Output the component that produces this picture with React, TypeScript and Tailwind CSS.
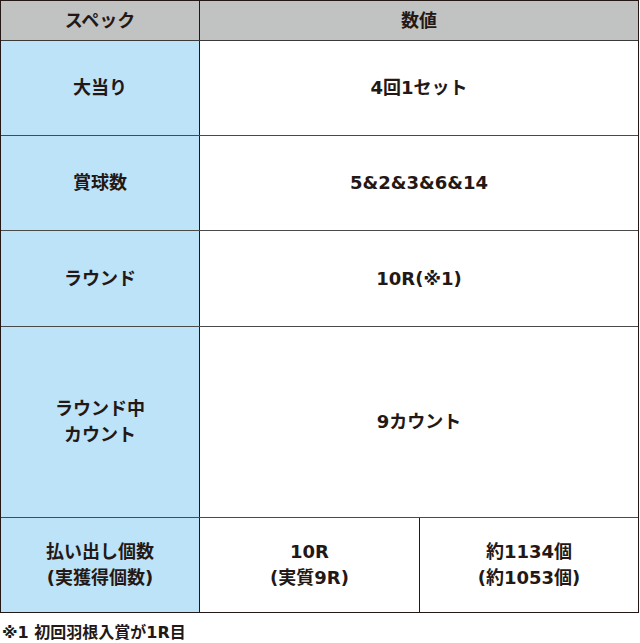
import React from "react";

const font = { fontFamily: '"DejaVu Sans", "Noto Sans CJK JP", sans-serif' };

export default function App() {
  const rows: { label: React.ReactNode; value: React.ReactNode; h: string }[] = [
    { label: "大当り", value: "4回1セット", h: "h-[95px]" },
    { label: "賞球数", value: "5&2&3&6&14", h: "h-[95px]" },
    { label: "ラウンド", value: "10R(※1)", h: "h-[96px]" },
    {
      label: (
        <>
          ラウンド中
          <br />
          カウント
        </>
      ),
      value: "9カウント",
      h: "h-[191px]",
    },
  ];
  return (
    <div className="w-[640px] h-[643px] bg-white text-[#231815] font-bold" style={font}>
      <div className="w-[639px] border border-[#231815] text-[18px] leading-[26px]">
        <div className="flex h-[40px] border-b border-[#3a3a3a] bg-[#c1c2c2]">
          <div className="w-[199px] border-r border-[#231815] flex items-center justify-center">スペック</div>
          <div className="flex-1 flex items-center justify-center">数値</div>
        </div>
        {rows.map((r, i) => (
          <div key={i} className={`flex ${r.h} border-b border-[#4a4a4a]`}>
            <div className="w-[199px] border-r border-[#231815] bg-[#bde3f8] flex items-center justify-center text-center">
              {r.label}
            </div>
            <div className="flex-1 flex items-center justify-center">{r.value}</div>
          </div>
        ))}
        <div className="flex h-[94px]">
          <div className="w-[199px] border-r border-[#231815] bg-[#bde3f8] flex items-center justify-center text-center">
            払い出し個数
            <br />
            (実獲得個数)
          </div>
          <div className="w-[220px] border-r border-[#231815] flex items-center justify-center text-center">
            10R
            <br />
            (実質9R)
          </div>
          <div className="flex-1 flex items-center justify-center text-center">
            約1134個
            <br />
            (約1053個)
          </div>
        </div>
      </div>
      <div className="pl-[2px] pt-[11px] text-[16px] leading-[18px]">※1 初回羽根入賞が1R目</div>
    </div>
  );
}
